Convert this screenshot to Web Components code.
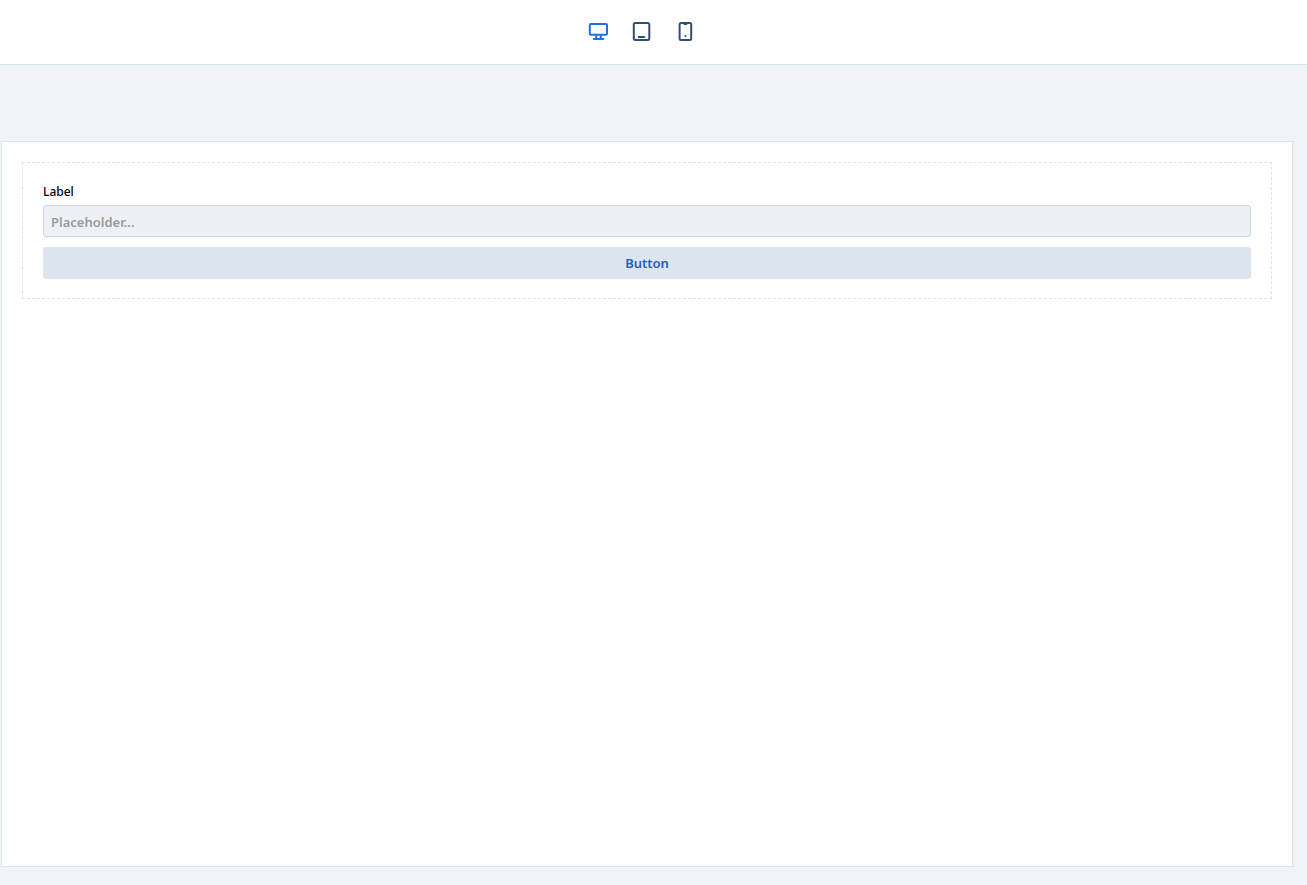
<!DOCTYPE html>
<html lang="en">
<head>
<meta charset="utf-8">
<title>Form preview</title>
<style>
  html, body { height: 100%; margin: 0; }
  body { font-family: "Noto Sans", "Open Sans", sans-serif; background: #f0f4f9; color: #000; }
</style>
</head>
<body>
<preview-app></preview-app>
<script>
  const define = (name, html) => customElements.define(name, class extends HTMLElement {
    constructor() {
      super();
      const template = document.createElement('template');
      template.innerHTML = html;
      this.attachShadow({ mode: 'open' }).append(template.content.cloneNode(true));
    }
  });

  define('device-button', `
    <style>
      :host { display: block; color: #334e6f; }
      :host([active]) { color: #2070e8; }
      button { display: block; padding: 0; border: 0; background: none; color: inherit; cursor: pointer; }
      ::slotted(svg) { display: block; width: 24px; height: 24px; fill: none; stroke: currentColor; stroke-width: 2; stroke-linecap: round; stroke-linejoin: round; }
    </style>
    <button type="button"><slot></slot></button>`);

  define('device-bar', `
    <style>
      :host { display: flex; justify-content: center; align-items: center; gap: 20px; height: 64px; padding-right: 23px; background: #fff; border-bottom: 1px solid #dce4ed; }
    </style>
    <device-button active><svg viewBox="0 0 24 24" role="img" aria-label="Desktop"><rect x="3.8" y="4" width="17.2" height="10.8" rx="1"/><path d="M10.2 15v4M14.8 15v4M7.8 19h9.6"/></svg></device-button>
    <device-button><svg viewBox="0 0 24 24" role="img" aria-label="Tablet"><rect x="3.8" y="3" width="15.5" height="17" rx="1.5"/><path d="M8.7 17h5.6"/></svg></device-button>
    <device-button><svg viewBox="0 0 24 24" role="img" aria-label="Phone"><rect x="5.6" y="3" width="11.6" height="17" rx="1.5"/><path d="M10.4 3.9h2"/><path d="M11.4 16h.01"/></svg></device-button>`);

  define('text-field', `
    <style>
      :host { display: flex; flex-direction: column; gap: 5px; }
      label { font-size: 12px; line-height: 17px; font-weight: 500; }
      input { box-sizing: border-box; width: 100%; height: 32px; padding: 2px 7px 0; border: 1px solid #cad6e4; border-radius: 3px; background: #edf1f6; font: 600 13px/20px "Noto Sans", "Open Sans", sans-serif; }
      input::placeholder { color: #9b9b9b; opacity: 1; }
    </style>
    <label for="field">Label</label>
    <input id="field" type="text" placeholder="Placeholder...">`);

  define('form-button', `
    <style>
      :host { display: block; }
      button { display: block; width: 100%; height: 32px; padding: 0; border: 0; border-radius: 3px; background: #dce4ee; color: #2460bb; font: 600 13px/20px "Noto Sans", "Open Sans", sans-serif; cursor: pointer; }
    </style>
    <button type="button"><slot></slot></button>`);

  define('form-container', `
    <style>
      :host { display: flex; flex-direction: column; gap: 10px; padding: 20px 20px 19px; border: 1px dashed #dce4ee; }
    </style>
    <slot></slot>`);

  define('preview-canvas', `
    <style>
      :host { display: block; box-sizing: border-box; padding: 20px; background: #fff; border: 1px solid #dce4ed; }
    </style>
    <slot></slot>`);

  define('preview-app', `
    <style>
      :host { display: flex; flex-direction: column; min-height: 100vh; }
      main { flex: 1; display: flex; flex-direction: column; padding: 76px 14px 18px 1px; }
      preview-canvas { flex: 1; }
    </style>
    <device-bar></device-bar>
    <main>
      <preview-canvas>
        <form-container>
          <text-field></text-field>
          <form-button>Button</form-button>
        </form-container>
      </preview-canvas>
    </main>`);
</script>
</body>
</html>
